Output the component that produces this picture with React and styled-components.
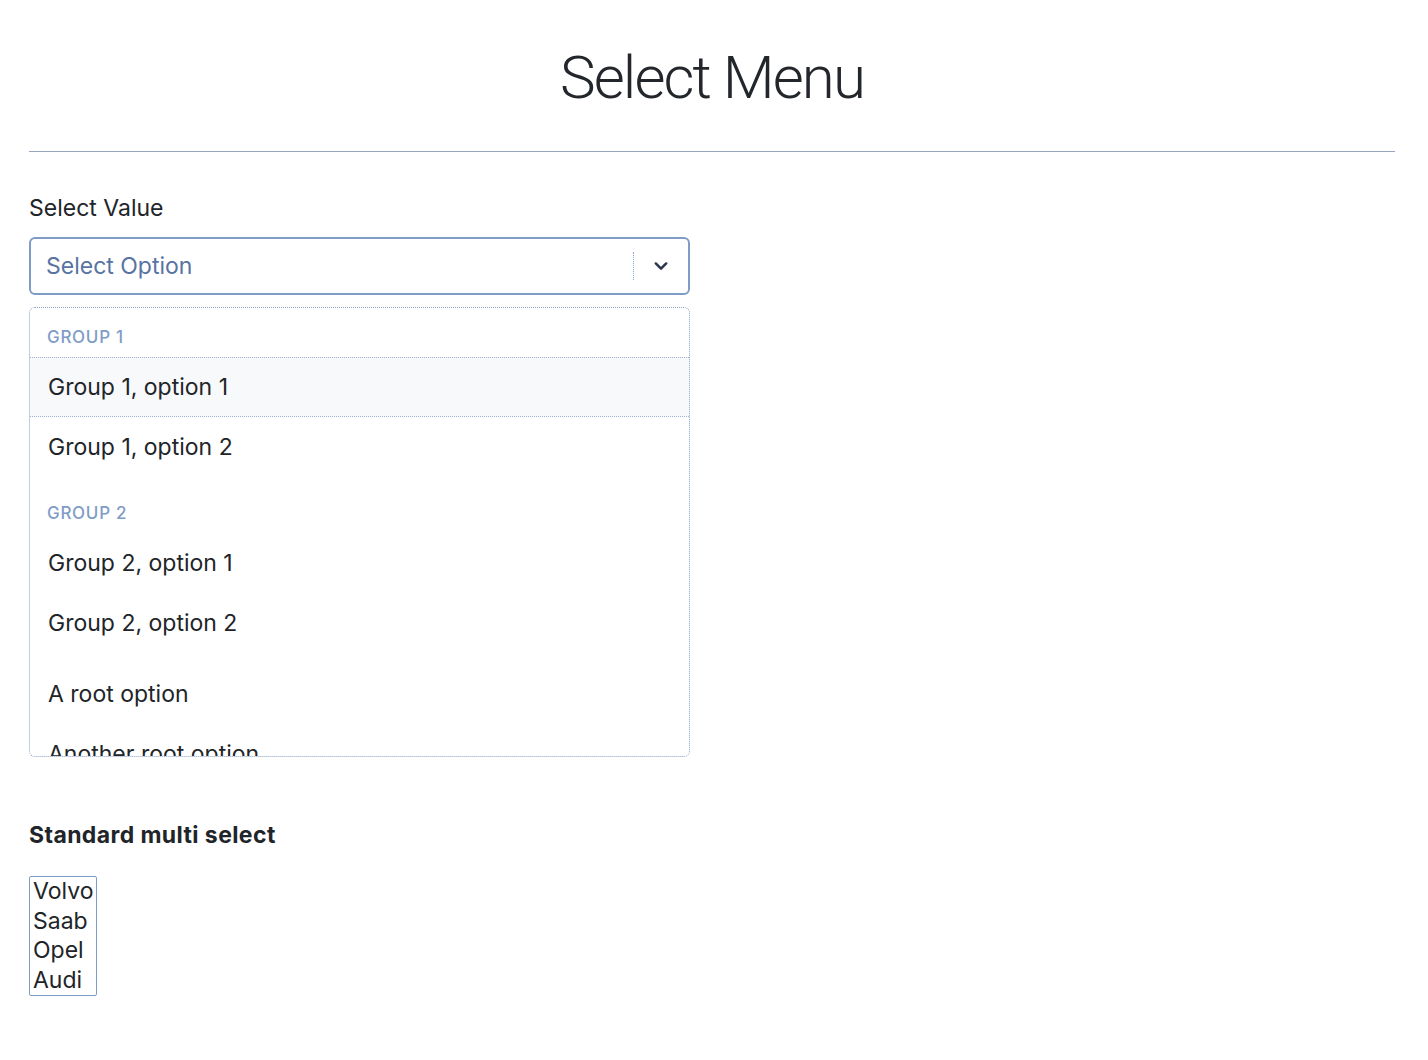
import React from "react";
import styled, { createGlobalStyle } from "styled-components";

const Global = createGlobalStyle`
  html, body { margin: 0; padding: 0; background: #fff; }
  body {
    font-family: Inter, "Noto Sans", "Liberation Sans", sans-serif;
    color: #212529;
  }
`;

const Page = styled.div`
  padding: 0 33px 40px 29px;
`;

const Title = styled.h1`
  margin: 0;
  padding-top: 42px;
  font-family: Roboto, Inter, "Liberation Sans", sans-serif;
  font-size: 60px;
  line-height: 72px;
  font-weight: 300;
  letter-spacing: -1.9px;
  text-align: center;
  color: #23272c;
`;

const Rule = styled.hr`
  margin: 37px 0 0;
  border: 0;
  border-top: 1px solid #97a6bf;
`;

const Label = styled.div`
  margin-top: 41px;
  font-size: 23px;
  line-height: 30px;
  color: #212529;
`;

const Field = styled.div`
  width: 661px;
  margin-top: 14px;
`;

const Control = styled.div`
  box-sizing: border-box;
  height: 58px;
  display: flex;
  align-items: center;
  border: 2px solid #7f9cc7;
  border-radius: 6px;
  background: #fff;
`;

const Placeholder = styled.div`
  flex: 1;
  padding-left: 15px;
  font-size: 23px;
  color: #5873a3;
`;

const Separator = styled.span`
  align-self: center;
  width: 0;
  height: 28px;
  border-left: 1px dotted #8fa6cc;
`;

const Indicator = styled.div`
  width: 54px;
  display: flex;
  align-items: center;
  justify-content: center;
  color: #2a3650;
`;

const Menu = styled.div`
  box-sizing: border-box;
  margin-top: 12px;
  height: 450px;
  overflow: hidden;
  border: 1px dotted #86a0c8;
  border-radius: 6px;
  background: #fff;
`;

const Group = styled.div`
  padding-bottom: 7px;
`;

const GroupHeading = styled.div`
  padding: 19px 17px 10px;
  font-size: 17px;
  line-height: 20px;
  font-weight: 500;
  letter-spacing: 0.7px;
  text-transform: uppercase;
  color: #7f9cc7;
`;

const Option = styled.div`
  box-sizing: border-box;
  height: 60px;
  display: flex;
  align-items: center;
  padding-left: 18px;
  font-size: 23px;
  color: #212529;
  background: ${(p) => (p.$focused ? "#f8f9fb" : "transparent")};
  border-top: 1px dotted ${(p) => (p.$focused ? "#9db1d2" : "transparent")};
  border-bottom: 1px dotted ${(p) => (p.$focused ? "#9db1d2" : "transparent")};
`;

const RootOptions = styled.div`
  padding-top: 4px;
`;

const SubHeading = styled.h5`
  margin: 63px 0 0;
  font-size: 23px;
  line-height: 30px;
  font-weight: 700;
  letter-spacing: 0.4px;
  color: #212529;
`;

const ListBox = styled.select`
  display: block;
  box-sizing: border-box;
  margin-top: 26px;
  width: 68px;
  height: 120px;
  padding: 0 0 0 3px;
  border: 1px solid #7f9cc7;
  border-radius: 2px;
  font-family: Inter, "Noto Sans", "Liberation Sans", sans-serif;
  font-size: 23px;
  color: #212529;
  background: #fff;
  overflow: hidden;
  outline: none;

  option {
    padding: 0;
    line-height: 29.7px;
    height: 29.7px;
  }
`;

const Chevron = () => (
  <svg width="18" height="18" viewBox="0 0 20 20" aria-hidden="true">
    <path
      d="M4.2 7.2 L10 13 L15.8 7.2"
      fill="none"
      stroke="currentColor"
      strokeWidth="2.8"
      strokeLinecap="round"
      strokeLinejoin="round"
    />
  </svg>
);

const groups = [
  { label: "Group 1", options: ["Group 1, option 1", "Group 1, option 2"] },
  { label: "Group 2", options: ["Group 2, option 1", "Group 2, option 2"] },
];

export default function App() {
  return (
    <>
      <Global />
      <Page>
        <Title>Select Menu</Title>
        <Rule />
        <Label>Select Value</Label>
        <Field>
          <Control>
            <Placeholder>Select Option</Placeholder>
            <Separator />
            <Indicator>
              <Chevron />
            </Indicator>
          </Control>
          <Menu>
            {groups.map((g, gi) => (
              <Group key={g.label}>
                <GroupHeading>{g.label}</GroupHeading>
                {g.options.map((o, oi) => (
                  <Option key={o} $focused={gi === 0 && oi === 0}>
                    {o}
                  </Option>
                ))}
              </Group>
            ))}
            <RootOptions>
              <Option>A root option</Option>
              <Option>Another root option</Option>
            </RootOptions>
          </Menu>
        </Field>
        <SubHeading>Standard multi select</SubHeading>
        <ListBox multiple size={4} defaultValue={[]}>
          <option value="volvo">Volvo</option>
          <option value="saab">Saab</option>
          <option value="opel">Opel</option>
          <option value="audi">Audi</option>
        </ListBox>
      </Page>
    </>
  );
}
